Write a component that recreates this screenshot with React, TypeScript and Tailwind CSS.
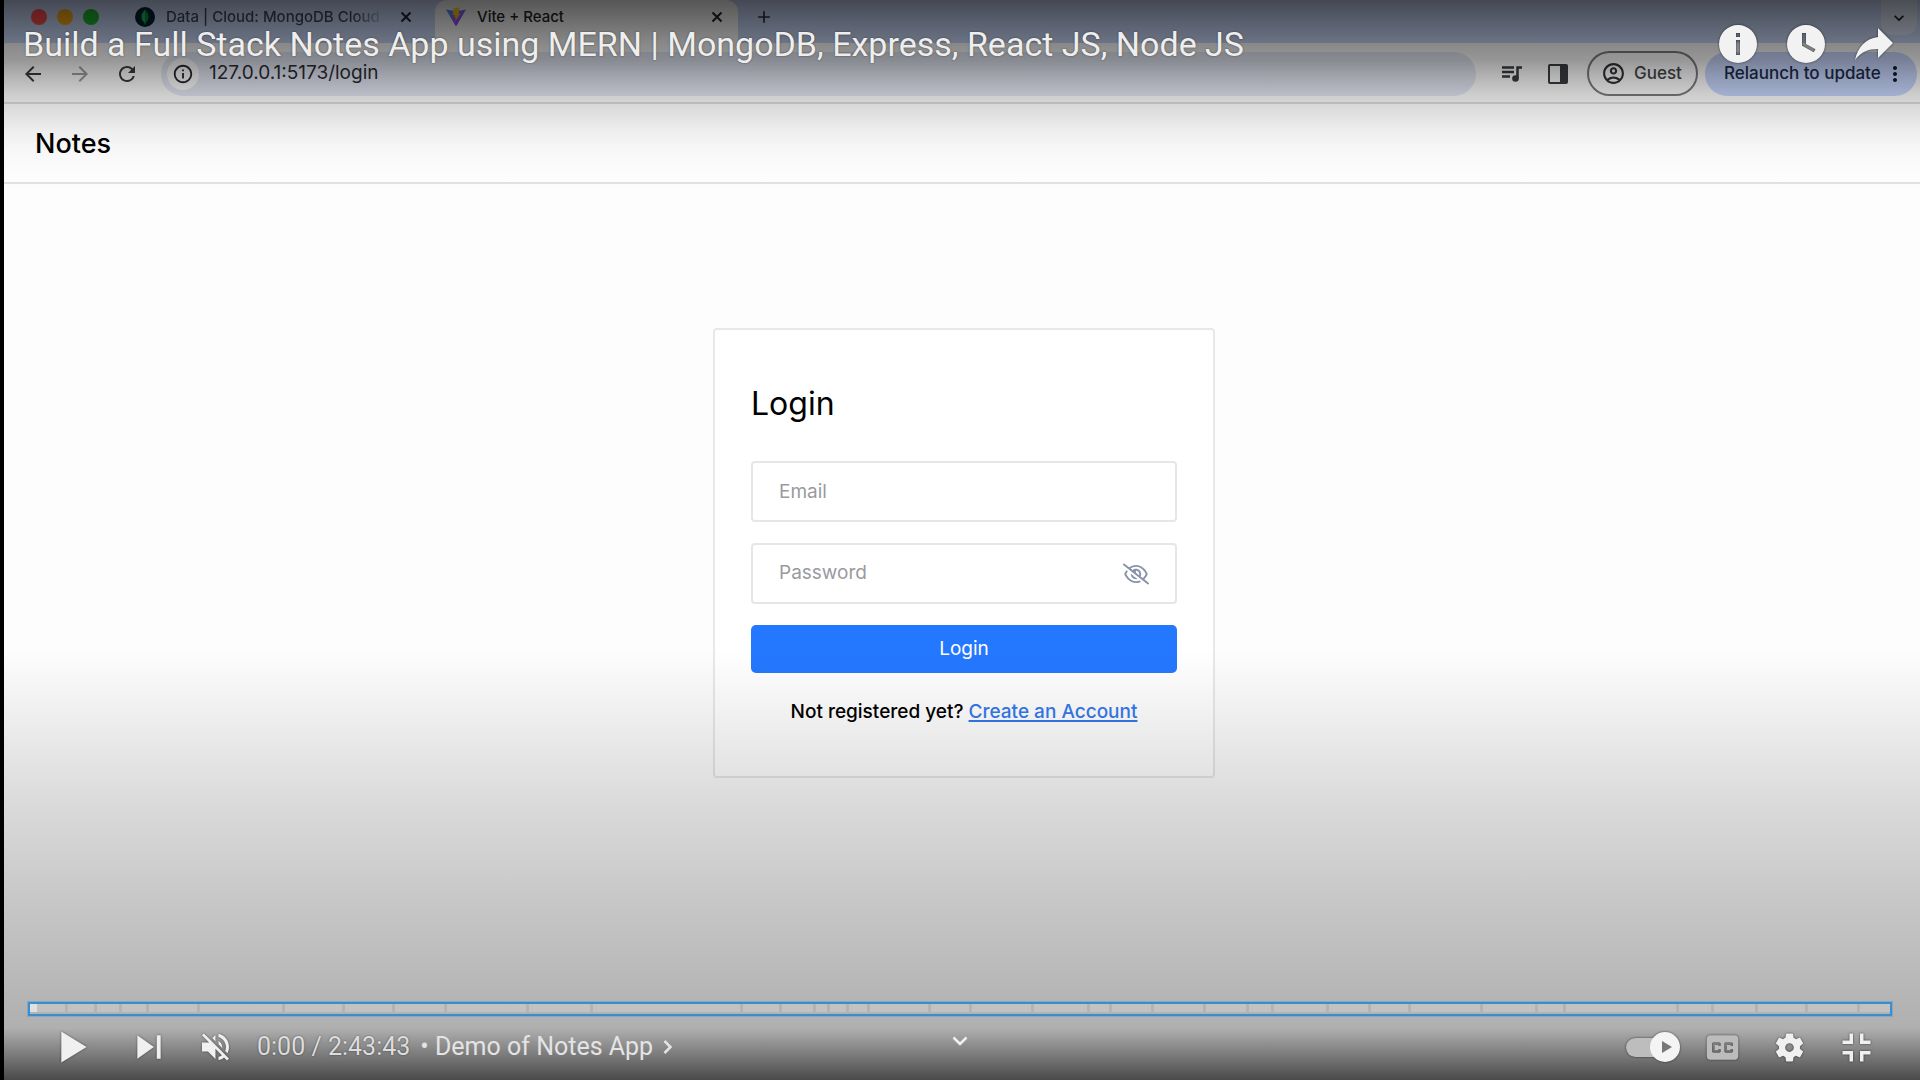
import type { ReactNode } from "react";
import {
  MdAdd,
  MdArrowBack,
  MdArrowForward,
  MdInfoOutline,
  MdKeyboardArrowDown,
  MdMoreVert,
  MdOutlineAccountCircle,
  MdRefresh,
} from "react-icons/md";
import { FaRegEyeSlash } from "react-icons/fa6";

const VIDEO_START = 29;
const VIDEO_END = 1890;
const CHAPTER_GAP = 3;
const CHAPTER_BREAKS = [
  67, 96, 121, 148, 199, 284, 344, 394, 446, 528, 592, 742, 781, 815, 829, 848, 869, 930, 971, 1034,
  1090, 1112, 1154, 1206, 1249, 1274, 1329, 1371, 1411, 1483, 1538, 1566, 1679, 1714, 1758, 1808, 1860,
];
const CHAPTERS = [...CHAPTER_BREAKS, VIDEO_END + CHAPTER_GAP].map(
  (end, i) => end - (i === 0 ? VIDEO_START : CHAPTER_BREAKS[i - 1]) - CHAPTER_GAP,
);

function Glyph({ className, children }: { className: string; children: ReactNode }) {
  return (
    <svg viewBox="0 0 36 36" fill="currentColor" className={className} aria-hidden="true">
      {children}
    </svg>
  );
}

function CloseIcon() {
  return (
    <svg viewBox="0 0 16 16" className="size-4" aria-hidden="true">
      <path d="M3.500 3.500l9 9m0-9l-9 9" fill="none" stroke="currentColor" strokeWidth="2" />
    </svg>
  );
}

function TabStrip() {
  return (
    <div className="flex h-[43px] items-start bg-[#c6d5f5]">
      <div className="flex h-[34px] w-[431px] items-center">
        <div className="flex gap-[10px] pl-[27px]">
          <span className="size-4 rounded-full bg-[#ff4d4f]" />
          <span className="size-4 rounded-full bg-[#f5a916]" />
          <span className="size-4 rounded-full bg-[#1fb52f]" />
        </div>
        <svg viewBox="0 0 20 20" className="ml-[36px] size-5 shrink-0" aria-hidden="true">
          <circle cx="10" cy="10" r="10" fill="#03202e" />
          <path d="M10 2.500c.7 1.400 3.400 3.600 3.400 7.200 0 2.800-1.400 4.600-3 6l-.2 1.800h-.5l-.2-1.800c-1.600-1.400-3-3.200-3-6 0-3.600 2.800-5.800 3.500-7.200z" fill="#13c264" />
          <path d="M10 2.500v15h.2l.2-1.800c1.600-1.400 3-3.200 3-6 0-3.600-2.700-5.800-3.400-7.200z" fill="#0b8a40" />
        </svg>
        <span className="ml-[11px] w-[220px] overflow-hidden bg-linear-to-r from-[#3c4457] from-85% to-[#3c445700] bg-clip-text text-[15px] font-medium whitespace-nowrap text-transparent">
          Data | Cloud: MongoDB Cloud
        </span>
        <button aria-label="Close tab" className="ml-[12px] text-[#1f2430]">
          <CloseIcon />
        </button>
      </div>
      <div className="flex h-full w-[303px] items-start rounded-t-xl bg-[#fbfbfb]">
        <div className="flex h-[34px] w-full items-center">
          <svg viewBox="0 0 20 20" className="ml-[11px] size-5" aria-hidden="true">
            <defs>
              <linearGradient id="vite-body" x1="0" y1="0" x2="0.6" y2="1">
                <stop offset="0" stopColor="#41a1ff" />
                <stop offset="1" stopColor="#b130fe" />
              </linearGradient>
              <linearGradient id="vite-bolt" x1="0" y1="0" x2="0" y2="1">
                <stop offset="0" stopColor="#ffdf3a" />
                <stop offset="1" stopColor="#ffa300" />
              </linearGradient>
            </defs>
            <path d="M0 2.500l10 17L20 2.500 10.300 4.300z" fill="url(#vite-body)" />
            <path d="M14 .2L7.200 1.500l-.4 6.800 2.200-.4-.6 3.100 1.500-.4-1.100 4.400L14.500 6.400l-2 .3z" fill="url(#vite-bolt)" />
          </svg>
          <span className="ml-[11px] grow text-[15px] font-medium text-[#22252b]">Vite + React</span>
          <button aria-label="Close tab" className="mr-[13px] text-[#1f2430]">
            <CloseIcon />
          </button>
        </div>
      </div>
      <button aria-label="New tab" className="ml-4 flex h-[34px] items-center text-[#2a3040]">
        <MdAdd className="size-5" />
      </button>
      <button
        aria-label="Search tabs"
        className="mr-[3px] ml-auto flex h-[35px] w-9 items-center justify-center rounded-b-xl bg-[#f0f0f0]/50 text-[#14161c]"
      >
        <MdKeyboardArrowDown className="size-5" />
      </button>
    </div>
  );
}

function Toolbar() {
  return (
    <div className="flex h-[61px] items-center border-b-2 border-[#dadde2] bg-[#fbfbfb] pt-0.5 pr-[3px]">
      <div className="flex items-center gap-[23px] pl-[17px] text-[#3a3c41]">
        <button aria-label="Back">
          <MdArrowBack className="size-6" />
        </button>
        <button aria-label="Forward" className="text-[#9c9ea4]">
          <MdArrowForward className="size-6" />
        </button>
        <button aria-label="Reload">
          <MdRefresh className="size-6" />
        </button>
      </div>
      <div className="ml-[22px] flex h-[44px] grow items-center rounded-full bg-[#e2e6f2] pl-1.5">
        <span className="flex size-8 items-center justify-center rounded-full bg-[#fbfbfb] text-[#26282c]">
          <MdInfoOutline className="size-[22px]" />
        </span>
        <input
          aria-label="Address"
          defaultValue="127.0.0.1:5173/login"
          className="ml-2.5 grow bg-transparent text-[19px] text-[#2b2d33] outline-none"
        />
      </div>
      <div className="ml-[25px] flex items-center gap-[25px] text-[#3a3c41]">
        <button aria-label="Media controls">
          <svg viewBox="0 0 22 18" className="h-[18px] w-[22px]" aria-hidden="true">
            <path
              d="M1 2.500h12M1 7h12M1 11.500h8M16.500 13V2.500H21"
              fill="none"
              stroke="currentColor"
              strokeWidth="2.500"
            />
            <circle cx="14.500" cy="13.500" r="3.300" fill="currentColor" />
          </svg>
        </button>
        <button aria-label="Side panel">
          <svg viewBox="0 0 20 20" className="size-5" aria-hidden="true">
            <path
              fillRule="evenodd"
              d="M2 0h16a2 2 0 0 1 2 2v16a2 2 0 0 1-2 2H2a2 2 0 0 1-2-2V2a2 2 0 0 1 2-2zm0 2v16h10V2z"
              fill="currentColor"
            />
          </svg>
        </button>
      </div>
      <button className="ml-[19px] flex h-[45px] w-[111px] items-center gap-2 rounded-full border-2 border-[#7c7c80] pl-3 text-[17px] font-medium text-[#44464b]">
        <MdOutlineAccountCircle className="size-[25px] text-[#303236]" />
        Guest
      </button>
      <button className="ml-[7px] flex h-[44px] w-[212px] items-center justify-between rounded-full bg-[#c6d5fb] pr-2.5 pl-[19px] text-[17px] font-medium whitespace-nowrap text-[#1c2a4a]">
        Relaunch to update
        <MdMoreVert className="size-6 shrink-0 text-[#10182c]" />
      </button>
    </div>
  );
}

function LoginCard() {
  return (
    <form
      className="w-[502px] rounded-sm border-2 border-[#e8e8e8] bg-white px-[36px] pt-[50px] pb-[50px]"
      onSubmit={(e) => e.preventDefault()}
    >
      <h1 className="mb-[33px] text-[32px] leading-12">Login</h1>
      <input
        type="text"
        aria-label="Email"
        placeholder="Email"
        className="mb-[21px] block h-[61px] w-full rounded-sm border-2 border-[#e6e6e6] bg-transparent px-[26px] text-[19px] outline-none placeholder:text-[#9a9a9e]"
      />
      <div className="mb-[21px] flex h-[61px] items-center rounded-sm border-2 border-[#e6e6e6] px-[26px]">
        <input
          type="password"
          aria-label="Password"
          placeholder="Password"
          className="grow bg-transparent text-[19px] outline-none placeholder:text-[#9a9a9e]"
        />
        <button type="button" aria-label="Show password" className="text-[#8a94a6]">
          <FaRegEyeSlash className="size-[26px]" />
        </button>
      </div>
      <button type="submit" className="block h-12 w-full rounded-[5px] bg-[#2478ff] text-[19px] text-white">
        Login
      </button>
      <p className="mt-[25px] text-center text-[19px] leading-7 font-medium">
        Not registered yet?{" "}
        <a href="#signup" className="text-[#3479ec] underline decoration-2 underline-offset-2">
          Create an Account
        </a>
      </p>
    </form>
  );
}

function TitleBar() {
  return (
    <div className="absolute inset-x-0 top-0 flex items-center pt-4 pr-[27px] pl-[23px] text-[#eee]">
      <h2 className="grow text-[34px] leading-14 [text-shadow:0_0_2px_rgba(0,0,0,0.5)]">
        <a href="#watch">Build a Full Stack Notes App using MERN | MongoDB, Express, React JS, Node JS</a>
      </h2>
      <div className="flex items-center gap-[30px]">
        <button aria-label="Info" className="drop-shadow-[0_0_1px_rgba(0,0,0,0.6)]">
          <svg viewBox="0 0 38 38" className="size-[38px]" aria-hidden="true">
            <path fill="#f2f2f2" fillRule="evenodd" d="M19 0a19 19 0 1 0 0 38a19 19 0 1 0 0-38zM17 8h4v4h-4zM17 15h4v15h-4z" />
          </svg>
        </button>
        <button aria-label="Watch later" className="drop-shadow-[0_0_1px_rgba(0,0,0,0.6)]">
          <svg viewBox="0 0 38 38" className="size-[38px]" aria-hidden="true">
            <path fill="#f2f2f2" fillRule="evenodd" d="M19 0a19 19 0 1 0 0 38a19 19 0 1 0 0-38zM15 8h4v11l9.500 5.200-1.800 3L15 20.800z" />
          </svg>
        </button>
        <button aria-label="Share" className="drop-shadow-[0_0_1px_rgba(0,0,0,0.6)]">
          <svg viewBox="0 0 38 34" className="h-[34px] w-[38px]" aria-hidden="true">
            <path fill="#f2f2f2" d="M23 1v9C10 12 3 20 0 33c6-8 13-11 23-11v9l15-15z" />
          </svg>
        </button>
      </div>
    </div>
  );
}

function ProgressBar() {
  return (
    <div className="relative mr-[28px] ml-[28px] border-2 border-[#3b8dcb] pb-0.5 outline outline-[#6b9fc8]/60">
      <div className="flex h-2 gap-[3px]">
        {CHAPTERS.map((width, i) => (
          <div key={i} className="basis-0 bg-white/20" style={{ flexGrow: width }}>
            {i === 0 && <div className="h-full w-[7px] bg-white/50" />}
          </div>
        ))}
      </div>
      <input
        type="range"
        aria-label="Seek"
        min={0}
        max={9823}
        defaultValue={0}
        className="absolute inset-0 h-full w-full cursor-pointer opacity-0"
      />
    </div>
  );
}

function Controls() {
  return (
    <div className="relative flex h-16 items-center pr-[32px] pb-0.5 pl-[38px] text-[#f0f0f0]">
      <div className="flex items-center drop-shadow-[0_0_1px_rgba(0,0,0,0.5)]">
        <button aria-label="Play">
          <Glyph className="size-[70px]">
            <path d="M12 26L25 18 12 10z" />
          </Glyph>
        </button>
        <button aria-label="Next" className="ml-[6px]">
          <Glyph className="size-[70px]">
            <path d="M12,24 20.500,18 12,12 V24z M22,12 v12 h2 V12 h-2z" />
          </Glyph>
        </button>
        <button aria-label="Unmute" className="ml-[6px]">
          <Glyph className="size-[54px]">
            <path d="m21.480,17.980c0,-1.770-1.020,-3.290-2.500,-4.030v2.210l2.450,2.450c.03,-.2.05,-.41.05,-.63zm2.500,0c0,.94-.2,1.820-.54,2.640l1.510,1.510c.66,-1.240 1.030,-2.650 1.030,-4.150 0,-4.280-2.990,-7.860-7,-8.760v2.050c2.890,.86 5,3.540 5,6.710zM9.250,8.980l-1.270,1.260 4.720,4.730H7.980v6H11.980l5,5v-6.730l4.250,4.250c-.67,.52-1.420,.93-2.250,1.180v2.060c1.380,-.31 2.630,-.95 3.690,-1.810l2.040,2.050 1.270,-1.270-9,-9-7.720,-7.720zm7.720,.99-2.090,2.080 2.090,2.090V9.980z" />
          </Glyph>
        </button>
      </div>
      <div className="ml-[13px] flex items-center text-[25px] text-[#ddd] [text-shadow:0_0_2px_rgba(0,0,0,0.5)]">
        <span>0:00 / 2:43:43</span>
        <button className="ml-2.5 flex items-center text-[#e4e4e4]">
          • Demo of Notes App
          <svg viewBox="0 0 10 16" className="ml-2.5 h-4 w-[10px]" aria-hidden="true">
            <path d="M1.500 2l6 6-6 6" fill="none" stroke="currentColor" strokeWidth="2.500" />
          </svg>
        </button>
      </div>
      <button aria-label="More videos" className="absolute top-5 left-1/2 -translate-x-1/2">
        <svg viewBox="0 0 16 10" className="h-[10px] w-4" aria-hidden="true">
          <path d="M1.500 1.500L8 8l6.500-6.500" fill="none" stroke="currentColor" strokeWidth="2.500" />
        </svg>
      </button>
      <div className="ml-auto flex items-center gap-[4px] drop-shadow-[0_0_1px_rgba(0,0,0,0.6)]">
        <label className="mr-[7px] flex h-[30px] w-[54px] cursor-pointer items-center rounded-full">
          <input type="checkbox" role="switch" defaultChecked aria-label="Autoplay" className="peer sr-only" />
          <span className="h-[19px] w-10 rounded-full bg-[#bdbdbd]" />
          <span className="-ml-4 flex size-[30px] shrink-0 items-center justify-center rounded-full bg-[#f4f4f4]">
            <svg viewBox="0 0 10 12" className="ml-1 h-3 w-[10px]" aria-hidden="true">
              <path d="M0 0l10 6-10 6z" fill="#777" />
            </svg>
          </span>
        </label>
        <button aria-label="Subtitles" className="text-[#bcbcbc]">
          <Glyph className="size-[63px]">
            <path
              fillRule="evenodd"
              d="M11,11C9.890,11 9,11.900 9,13V23C9,24.100 9.890,25 11,25H25C26.100,25 27,24.100 27,23V13C27,11.900 26.100,11 25,11zM17,17H15.500V16.500H13.500V19.500H15.500V19H17V20C17,20.550 16.550,21 16,21H13C12.450,21 12,20.550 12,20V16C12,15.450 12.450,15 13,15H16C16.550,15 17,15.450 17,16zM24,17H22.500V16.500H20.500V19.500H22.500V19H24V20C24,20.550 23.550,21 23,21H20C19.450,21 19,20.550 19,20V16C19,15.450 19.450,15 20,15H23C23.550,15 24,15.450 24,16z"
            />
          </Glyph>
        </button>
        <button aria-label="Settings">
          <Glyph className="size-[63px]">
            <path d="m23.940,18.780c.03,-.25.05,-.51.05,-.78 0,-.27-.02,-.52-.05,-.78l1.680,-1.320c.15,-.12.19,-.33.09,-.51l-1.600,-2.760c-.09,-.17-.31,-.24-.48,-.17l-1.990,.8c-.41,-.32-.86,-.58-1.350,-.78l-.3,-2.120c-.02,-.19-.19,-.33-.39,-.33h-3.200c-.2,0-.36,.14-.39,.33l-.3,2.120c-.48,.2-.93,.47-1.350,.78l-1.990,-.8c-.18,-.07-.39,0-.48,.17l-1.600,2.760c-.1,.17-.05,.39.09,.51l1.680,1.320c-.03,.25-.05,.52-.05,.78 0,.26.02,.52.05,.78l-1.680,1.320c-.15,.12-.19,.33-.09,.51l1.600,2.760c.09,.17.31,.24.48,.17l1.990,-.8c.41,.32.86,.58 1.350,.78l.3,2.120c.02,.19.19,.33.39,.33h3.200c.2,0 .36,-.14.39,-.33l.3,-2.120c.48,-.2.93,-.47 1.350,-.78l1.990,.8c.18,.07.39,0 .48,-.17l1.600,-2.760c.09,-.17.05,-.39-.09,-.51zM18,20.500c-1.380,0-2.500,-1.120-2.500,-2.500 0,-1.380 1.120,-2.500 2.500,-2.500 1.380,0 2.500,1.120 2.500,2.500 0,1.380-1.120,2.500-2.500,2.500z" />
          </Glyph>
        </button>
        <button aria-label="Exit full screen">
          <Glyph className="size-[63px]">
            <path d="m14,14h-4v2h6v-6h-2zM22,14v-4h-2v6h6v-2zM20,26h2v-4h4v-2h-6zM10,22h4v4h2v-6h-6z" />
          </Glyph>
        </button>
      </div>
    </div>
  );
}

export default function App() {
  return (
    <div className="relative min-h-screen overflow-hidden border-l-4 border-black bg-[#fdfdfd] font-['Inter',sans-serif] text-black">
      <TabStrip />
      <Toolbar />
      <header className="flex h-20 items-center border-b-2 border-[#e2e2e2] bg-white pt-0.5 pl-[31px]">
        <span className="text-[27px] font-medium">Notes</span>
      </header>
      <main className="flex justify-center pt-36 pb-72 pl-1">
        <LoginCard />
      </main>

      <div className="pointer-events-none absolute inset-x-0 top-0 h-[190px] bg-[linear-gradient(to_bottom,rgba(0,0,0,0.66)_0,rgba(0,0,0,0.46)_43px,rgba(0,0,0,0.4)_60px,rgba(0,0,0,0.29)_76px,rgba(0,0,0,0.18)_95px,rgba(0,0,0,0.14)_108px,rgba(0,0,0,0.07)_130px,rgba(0,0,0,0.03)_150px,rgba(0,0,0,0)_190px)]" />
      <div className="pointer-events-none absolute inset-x-0 bottom-0 h-[430px] bg-[linear-gradient(to_top,rgba(0,0,0,0.71)_0,rgba(0,0,0,0.305)_52px,rgba(0,0,0,0.285)_82px,rgba(0,0,0,0.25)_127px,rgba(0,0,0,0.2)_196px,rgba(0,0,0,0.14)_272px,rgba(0,0,0,0.095)_325px,rgba(0,0,0,0.04)_385px,rgba(0,0,0,0)_430px)]" />

      <div className="absolute inset-0 -left-1 font-['Roboto',sans-serif]">
        <TitleBar />
        <div className="absolute inset-x-0 bottom-0">
          <ProgressBar />
          <Controls />
        </div>
      </div>
    </div>
  );
}
